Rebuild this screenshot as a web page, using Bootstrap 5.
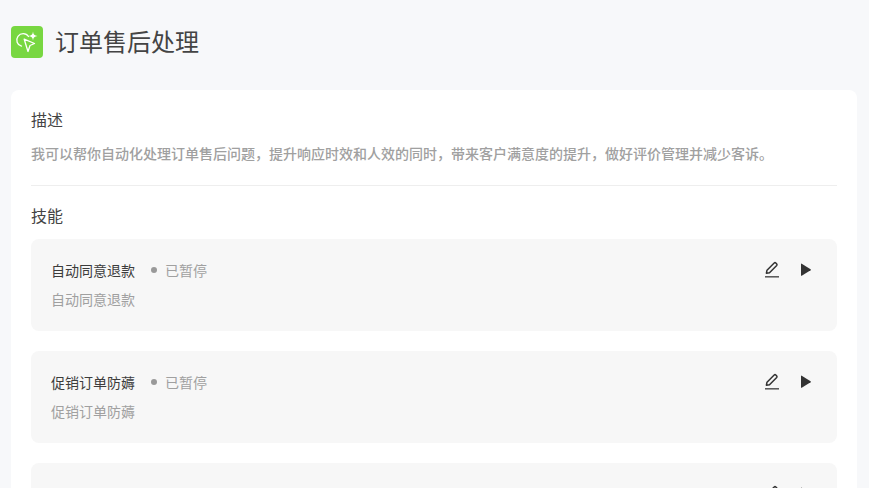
<!DOCTYPE html>
<html lang="zh-CN">
<head>
    <meta charset="UTF-8">
    <meta name="viewport" content="width=device-width, initial-scale=1.0">
    <title>订单售后处理</title>
    <link href="https://cdn.jsdelivr.net/npm/bootstrap@5.3.0/dist/css/bootstrap.min.css" rel="stylesheet">
    <script src="https://cdn.jsdelivr.net/npm/bootstrap@5.3.0/dist/js/bootstrap.bundle.min.js"></script>
    <style>
        html, body {
            height: 488px;
            overflow: hidden;
        }
        body {
            background-color: #f7f8fa;
            font-family: "Noto Sans CJK SC", "Liberation Sans", sans-serif;
            color: #444;
        }
        .page-head {
            padding: 26px 11px 0;
            height: 90px;
        }
        .app-logo {
            width: 32px;
            height: 32px;
            border-radius: 4px;
            background: #78d741;
        }
        .app-title {
            font-size: 24px;
            line-height: 30px;
            color: #444;
            margin-left: 12px;
        }
        .main-panel {
            margin: 0 12px 0 11px;
            padding: 18px 20px 0;
            background: #fff;
            border-radius: 8px;
        }
        .block-title {
            font-size: 16px;
            line-height: 22px;
            color: #444;
        }
        .block-desc {
            font-size: 14px;
            line-height: 20px;
            color: #a0a0a0;
            margin-top: 13px;
            font-weight: 500;
        }
        .split-line {
            border-top: 1px solid #eee;
            margin: 22px 0 18px;
        }
        .skill-head {
            margin-bottom: 13px;
        }
        .skill-item {
            height: 92px;
            margin-bottom: 20px;
            padding: 21px 21px 0 20px;
            background: #f7f7f7;
            border-radius: 8px;
        }
        .skill-name {
            font-size: 14px;
            line-height: 20px;
            color: #3c3c3c;
        }
        .skill-state {
            font-size: 14px;
            line-height: 20px;
            color: #a0a0a0;
        }
        .state-dot {
            width: 6px;
            height: 6px;
            border-radius: 50%;
            background: #999;
            margin: 0 8px 0 16px;
        }
        .skill-note {
            font-size: 14px;
            line-height: 20px;
            color: #a0a0a0;
            margin-top: 9px;
        }
        .skill-tools {
            gap: 18px;
            margin-right: 3px;
            margin-top: 1px;
        }
    </style>
</head>
<body>
    <div class="page-head d-flex align-items-start">
        <div class="app-logo d-flex align-items-center justify-content-center">
            <svg width="32" height="32" viewBox="0 0 32 32" fill="none" stroke="#fff" stroke-width="1.3" stroke-linejoin="round" stroke-linecap="round">
                <path d="M13.2 13.2 L23.5 17.5 L19 19.5 L17 25.5 Z"/>
                <path d="M10.5 20.2 A6.4 6.4 0 1 1 17.5 10.5"/>
                <path d="M22 5.5 C22.3 8.4 23.6 9.7 26.5 10 C23.6 10.3 22.3 11.6 22 14.5 C21.7 11.6 20.4 10.3 17.5 10 C20.4 9.7 21.7 8.4 22 5.5 Z" fill="#fff" stroke="none"/>
            </svg>
        </div>
        <div class="app-title">订单售后处理</div>
    </div>

    <div class="main-panel">
        <div class="block-title">描述</div>
        <div class="block-desc">我可以帮你自动化处理订单售后问题，提升响应时效和人效的同时，带来客户满意度的提升，做好评价管理并减少客诉。</div>
        <div class="split-line"></div>
        <div class="block-title skill-head">技能</div>

        <div class="skill-item d-flex justify-content-between align-items-start">
            <div>
                <div class="d-flex align-items-center">
                    <span class="skill-name">自动同意退款</span>
                    <span class="state-dot"></span>
                    <span class="skill-state">已暂停</span>
                </div>
                <div class="skill-note">自动同意退款</div>
            </div>
            <div class="skill-tools d-flex align-items-center">
                <svg width="16" height="18" viewBox="0 0 16 18" fill="none" stroke="#333" stroke-width="1.5"><path d="M3.4 12.2 L4 9.2 L11.2 2 Q12 1.3 12.8 2 L13.7 2.9 Q14.4 3.7 13.7 4.5 L6.5 11.7 Z" stroke-linejoin="round"/><path d="M2 15.8 H16" stroke="#555"/></svg>
                <svg width="16" height="18" viewBox="0 0 16 18"><path d="M4 3 Q4 2.3 4.7 2.7 L13.6 8.2 Q14.2 8.7 13.6 9.2 L4.7 14.7 Q4 15.1 4 14.4 Z" fill="#333"/></svg>
            </div>
        </div>

        <div class="skill-item d-flex justify-content-between align-items-start">
            <div>
                <div class="d-flex align-items-center">
                    <span class="skill-name">促销订单防薅</span>
                    <span class="state-dot"></span>
                    <span class="skill-state">已暂停</span>
                </div>
                <div class="skill-note">促销订单防薅</div>
            </div>
            <div class="skill-tools d-flex align-items-center">
                <svg width="16" height="18" viewBox="0 0 16 18" fill="none" stroke="#333" stroke-width="1.5"><path d="M3.4 12.2 L4 9.2 L11.2 2 Q12 1.3 12.8 2 L13.7 2.9 Q14.4 3.7 13.7 4.5 L6.5 11.7 Z" stroke-linejoin="round"/><path d="M2 15.8 H16" stroke="#555"/></svg>
                <svg width="16" height="18" viewBox="0 0 16 18"><path d="M4 3 Q4 2.3 4.7 2.7 L13.6 8.2 Q14.2 8.7 13.6 9.2 L4.7 14.7 Q4 15.1 4 14.4 Z" fill="#333"/></svg>
            </div>
        </div>

        <div class="skill-item d-flex justify-content-between align-items-start">
            <div></div>
            <div class="skill-tools d-flex align-items-center">
                <svg width="16" height="18" viewBox="0 0 16 18" fill="none" stroke="#333" stroke-width="1.5"><path d="M3.4 12.2 L4 9.2 L11.2 2 Q12 1.3 12.8 2 L13.7 2.9 Q14.4 3.7 13.7 4.5 L6.5 11.7 Z" stroke-linejoin="round"/><path d="M2 15.8 H16" stroke="#555"/></svg>
                <svg width="16" height="18" viewBox="0 0 16 18"><path d="M4 3 Q4 2.3 4.7 2.7 L13.6 8.2 Q14.2 8.7 13.6 9.2 L4.7 14.7 Q4 15.1 4 14.4 Z" fill="#333"/></svg>
            </div>
        </div>
    </div>
</body>
</html>
